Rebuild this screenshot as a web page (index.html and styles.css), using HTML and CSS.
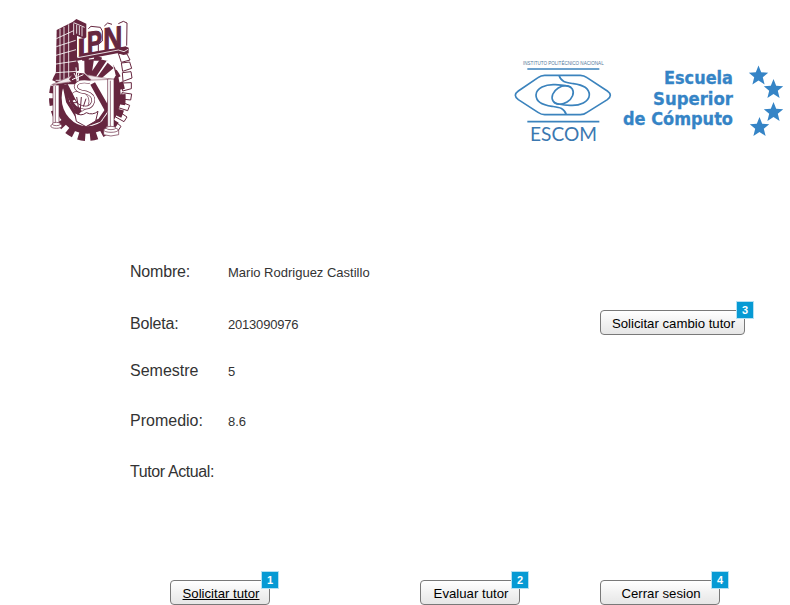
FILE: index.html
```html
<!DOCTYPE html>
<html lang="es">
<head>
<meta charset="utf-8">
<title>Tutorías ESCOM</title>
<link rel="stylesheet" href="styles.css">
</head>
<body>
<header class="header">
  <svg class="ipn" viewBox="0 0 300 420" role="img" aria-label="IPN">
    <!-- gear -->
    <g fill="#fff" stroke="#66263f" stroke-width="3">
      <path d="M238 124l26 2 9 18-26 7zM247 153l25-3 6 19-27 9zM250 182l26-3 3 19-27 10zM250 213l27-1v18l-26 7zM249 242l29 4-3 18-28-3zM244 269l28 11-6 16-28-9zM236 296l28 19-9 14-27-15zM222 323l24 20-10 15-27-18z"/>
    </g>
    <ellipse cx="145" cy="257" rx="88" ry="97" fill="#fff" stroke="#66263f" stroke-width="22"/>
    <ellipse cx="145" cy="257" rx="103" ry="118" fill="none" stroke="#66263f" stroke-width="24" stroke-dasharray="21 15"/>
    <path d="M216 148q29 39 29 102-2 52-33 93l-22-18q30-33 31-82 0-50-25-83z" fill="#66263f"/>
    <path d="M76 222l10 47 28 45 31 24 36-13 27-39 10-66" fill="none" stroke="#66263f" stroke-width="10"/>
    <!-- spokes -->
    <path d="M118 146h102l10 44-10 20-98-6z" fill="#fff"/>
    <path d="M136 144l29-3-6 39-22 25zM183 142l20 4-38 57-18-7zM206 152l18 16-40 34-12-3zM154 218l14-7 43 75-11 15zM68 219l18-3 42 82-13 13z" fill="#66263f"/>
    <path d="M107 302q20 13 35 0 19 9 35-4l-7 29-29 17-29-16z" fill="#fff" stroke="#66263f" stroke-width="3"/>
    <!-- building -->
    <path d="M53 54l49-25 12 3v185H50z" fill="#66263f"/>
    <path d="M63 50v160M75 45v166M89 37v174M52 80l52-24M52 104l58-19M51 130l60-17M51 156l61-9M51 182l61-4M50 205h63" fill="none" stroke="#fff" stroke-width="2.5"/>
    <path d="M102 29l10-8 30 14v41l-7 4-28-12z" fill="#66263f"/>
    <path d="M104 32l33 14M113 38v27M121 42v27M129 45v28M104 34v35" fill="none" stroke="#fff" stroke-width="2.5"/>
    <!-- lettering and slab -->
    <path d="M113 138l21-14 103-17 22-4 10 4v17l-15 5-19-5-121 22z" fill="#66263f"/>
    <path d="M116 137l122-23 17 5 12-7" fill="none" stroke="#fff" stroke-width="2.5"/>
    <path d="M148 49l26-4 14 10v58l-41 9zM195 38l17-4 24-2 17-6 10 5v70l-67 13z" fill="#fff"/>
    <path d="M148 50l8-7 28 3 6 11v30l-12 10v26M196 42l10-9 13 4M238 35l15-7 11 5-1 68" fill="none" stroke="#66263f" stroke-width="3"/>
    <g transform="translate(117 134) skewY(-8)" font-family="Liberation Sans, sans-serif" font-weight="bold" fill="#66263f" stroke="#66263f" stroke-width="3">
      <text x="-1" y="-2" font-size="72" textLength="22" lengthAdjust="spacingAndGlyphs">I</text>
      <text x="27" y="-5" font-size="93" textLength="45" lengthAdjust="spacingAndGlyphs">P</text>
      <text x="76" y="-8" font-size="95" textLength="57" lengthAdjust="spacingAndGlyphs">N</text>
    </g>
    <!-- roof, snake, pillars -->
    <path d="M38 218l78-34 102 18-102 4z" fill="#f1e8eb" stroke="#9b7180" stroke-width="2"/>
    <path d="M90 202l10-13 17-7 25 3 15 18-23 9-36-2z" fill="#66263f"/>
    <path d="M111 166l4 52M126 175q-15 12-4 39M99 203l34-15M134 181l21 20M105 183l15 30" stroke="#fff" stroke-width="3" fill="none"/>
    <circle cx="119" cy="268" r="31" fill="none" stroke="#66263f" stroke-width="2"/>
    <path d="M153 210q-39-6-43 13 1 15 30 18 27 8 22 29-7 22-34 15-17-4-24-20" fill="none" stroke="#66263f" stroke-width="11"/>
    <path d="M153 210q-39-6-43 13 1 15 30 18 27 8 22 29-7 22-34 15-17-4-24-20" fill="none" stroke="#fff" stroke-width="7"/>
    <path d="M113 255l5 30M127 255l-3 38M141 260l-8 24M91 257l11 33M90 272h25" stroke="#66263f" stroke-width="3"/>
    <path d="M42 219h18v121H42zM206 201h19v149h-19z" fill="#fff" stroke="#66263f" stroke-width="2"/>
    <path d="M49 222v112M214 206v139" stroke="#66263f" stroke-width="2"/>
    <g fill="#fff" stroke="#66263f" stroke-width="2">
      <ellipse cx="52" cy="342" rx="17" ry="7"/><ellipse cx="52" cy="336" rx="12" ry="5"/>
      <path d="M194 355v13q21 8 45 0v-13z"/><ellipse cx="216" cy="354" rx="22" ry="7"/><ellipse cx="216" cy="348" rx="14" ry="5"/>
    </g>
  </svg>
  <div class="school">
    <svg class="escom" viewBox="0 0 360 300" role="img" aria-label="ESCOM">
      <g fill="none" stroke="#3b83bd" stroke-width="5">
        <path d="M67 57h216M67 215h216"/>
        <path d="M119 76h107q11 0 20 7l61 40q18 13 0 26l-61 38q-9 7-20 7H119q-10 0-20-7l-59-38q-18-13 0-26l59-40q9-7 20-7z"/>
        <path id="strand" d="M162 76C168 97 184 98 205 101C236 105 253 118 253 135C252 155 225 168 195 166C175 165 158 164 147 157"/>
        <use href="#strand" transform="rotate(180 173 135)"/>
        <ellipse cx="173" cy="135" rx="34" ry="25" transform="rotate(-32 173 135)"/>
      </g>
      <text x="54" y="46" class="institute" textLength="242" lengthAdjust="spacingAndGlyphs">INSTITUTO POLITÉCNICO NACIONAL</text>
      <text x="75" y="272" class="acronym" textLength="201" lengthAdjust="spacingAndGlyphs">ESCOM</text>
    </svg>
    <svg class="school-name" viewBox="0 0 165 90">
      <g class="name">
        <text x="39" y="28.5" textLength="69" lengthAdjust="spacingAndGlyphs">Escuela</text>
        <text x="28" y="49.5" textLength="80" lengthAdjust="spacingAndGlyphs">Superior</text>
        <text x="-2" y="69.5" textLength="110" lengthAdjust="spacingAndGlyphs">de Cómputo</text>
      </g>
      <defs><path id="star" d="M0-10l2.7 6.7 7 .5-5.4 4.5 1.8 7.2L0 5l-6.1 3.9 1.8-7.2-5.4-4.5 7-.5z"/></defs>
      <g fill="#3584c6">
        <use href="#star" x="133.5" y="20.5"/><use href="#star" x="148.5" y="34"/>
        <use href="#star" x="148.5" y="57"/><use href="#star" x="134.5" y="72"/>
      </g>
    </svg>
  </div>
</header>
<main class="details">
  <span class="label snug">Nombre:</span><span class="value">Mario Rodriguez Castillo</span><span></span>
  <span class="label snug">Boleta:</span><span class="value snug">2013090976</span>
  <button class="btn change">Solicitar cambio tutor<span class="badge">3</span></button>
  <span class="label">Semestre</span><span class="value">5</span><span></span>
  <span class="label">Promedio:</span><span class="value">8.6</span><span></span>
  <span class="label tutor">Tutor Actual:</span><span class="value"></span><span></span>
</main>
<footer class="actions">
  <button class="btn request"><u>Solicitar tutor</u><span class="badge">1</span></button>
  <button class="btn evaluate">Evaluar tutor<span class="badge">2</span></button>
  <button class="btn logout">Cerrar sesion<span class="badge">4</span></button>
</footer>
</body>
</html>
```
FILE: styles.css
```css
* { box-sizing: border-box; }
body {
  margin: 0;
  width: 790px;
  height: 605px;
  display: flex;
  flex-direction: column;
  overflow: hidden;
  background: #fff;
  color: #333;
  font-family: "Liberation Sans", Arial, sans-serif;
}
.header {
  display: flex;
  justify-content: space-between;
  height: 246px;
  padding: 10px 0 0 40px;
}
.ipn { width: 100px; height: 140px; margin-top: 2px; margin-left: -1px; }
.school { display: flex; padding-top: 40px; }
.escom { width: 120px; height: 100px; overflow: visible; }
.school-name { width: 165px; height: 90px; margin-top: 5px; overflow: visible; }
.institute { font: 17px "Liberation Sans", sans-serif; fill: #52789b; }
.acronym { font: 58px Lato, sans-serif; fill: #3b78b0; }
.name { font: bold 17px "DejaVu Sans", sans-serif; fill: #3584c6; stroke: #3584c6; stroke-width: 0.3px; }
.details {
  display: grid;
  grid-template-columns: 98px 372px 145px;
  grid-template-rows: 52px 52px 42px 58px 44px;
  align-items: center;
  padding-left: 130px;
}
.label { font-size: 16px; line-height: 20px; }
.snug { letter-spacing: -0.2px; }
.tutor { letter-spacing: -0.4px; white-space: nowrap; }
.value { font-size: 13px; line-height: 18px; padding-top: 1px; }
.btn {
  position: relative;
  height: 25px;
  padding: 2px 0 0 2px;
  border: 1px solid #797979;
  border-radius: 4px;
  background: linear-gradient(#fff, #f2f2f2 50%, #e6e6e6);
  color: #000;
  font: 13.2px "Liberation Sans", Arial, sans-serif;
  white-space: nowrap;
}
.change { margin-top: -3px; }
.badge {
  position: absolute;
  top: -10px;
  right: -10px;
  width: 18px;
  height: 18px;
  border: 1px solid #b5e1f3;
  background: #069ad4;
  color: #fff;
  font-size: 11px;
  font-weight: bold;
  line-height: 16px;
  text-align: center;
}
.actions {
  display: flex;
  margin-top: auto;
  padding-left: 170px;
}
.request { width: 100px; margin-right: 150px; }
.evaluate { width: 100px; margin-right: 80px; }
.logout { width: 120px; }
```
